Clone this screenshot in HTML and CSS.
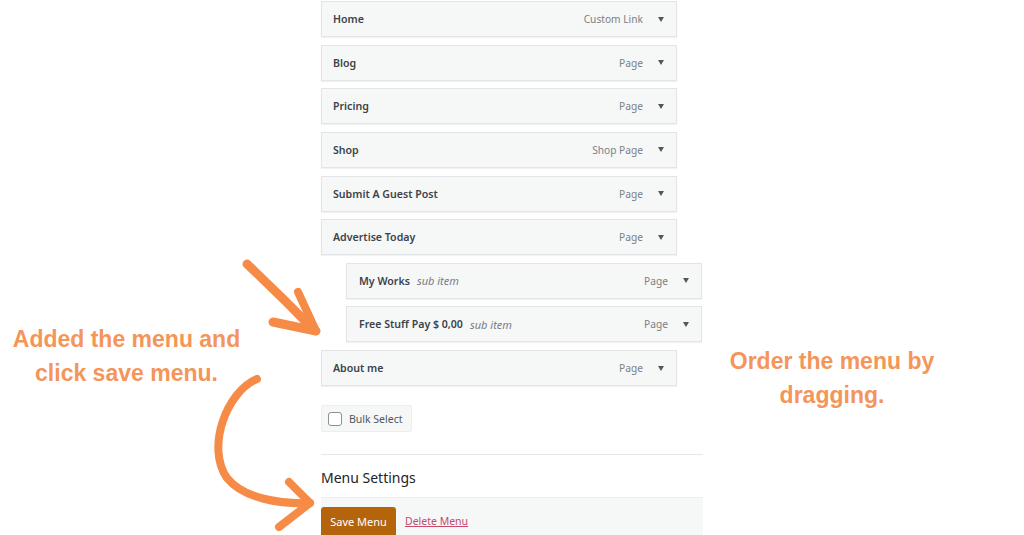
FILE: index.html
```html
<!DOCTYPE html>
<html>
<head>
<meta charset="utf-8">
<link rel="stylesheet" href="styles.css">
</head>
<body>
<div class="page">
  <div class="menu">
    <ul class="items">
      <li class="item"><span class="title">Home</span><span class="type">Custom Link</span><span class="caret"></span></li>
      <li class="item"><span class="title">Blog</span><span class="type">Page</span><span class="caret"></span></li>
      <li class="item"><span class="title">Pricing</span><span class="type">Page</span><span class="caret"></span></li>
      <li class="item"><span class="title">Shop</span><span class="type">Shop Page</span><span class="caret"></span></li>
      <li class="item"><span class="title">Submit A Guest Post</span><span class="type">Page</span><span class="caret"></span></li>
      <li class="item"><span class="title">Advertise Today</span><span class="type">Page</span><span class="caret"></span></li>
      <li class="item sub"><span class="title">My Works</span><span class="subtag">sub item</span><span class="type">Page</span><span class="caret"></span></li>
      <li class="item sub"><span class="title">Free Stuff Pay $ 0,00</span><span class="subtag">sub item</span><span class="type">Page</span><span class="caret"></span></li>
      <li class="item"><span class="title">About me</span><span class="type">Page</span><span class="caret"></span></li>
    </ul>
    <label class="bulk"><span class="check"></span><span>Bulk Select</span></label>
    <div class="sep"></div>
    <h2 class="settings">Menu Settings</h2>
    <div class="actions">
      <button class="save">Save Menu</button>
      <a class="delete" href="#">Delete Menu</a>
    </div>
  </div>

  <div class="note note-left">Added the menu and<br>click save menu.</div>
  <div class="note note-right">Order the menu by<br>dragging.</div>

  <svg class="arrows" width="1024" height="535" viewBox="0 0 1024 535">
    <g fill="none" stroke="#f68b47" stroke-linecap="round" stroke-linejoin="round">
      <path d="M247 264 Q 282 297 314 330" stroke-width="9"/>
      <path d="M298 292 L316 331" stroke-width="8"/>
      <path d="M273 322 L316 331" stroke-width="9"/>
      <path d="M257 379 C 226 392, 206 448, 227 478 C 244 499, 280 504, 310 503" stroke-width="8"/>
      <path d="M289 482 L310 503" stroke-width="8"/>
      <path d="M279 527 L310 503" stroke-width="8"/>
    </g>
  </svg>
</div>
</body>
</html>
```

FILE: styles.css
```css
* { box-sizing: border-box; }
html, body {
  margin: 0;
  padding: 0;
  background: #ffffff;
}
.page {
  position: relative;
  width: 1024px;
  height: 535px;
  overflow: hidden;
  font-family: "Noto Sans", "Open Sans", sans-serif;
}
.menu {
  margin-left: 321px;
  width: 382px;
  padding-top: 1px;
  display: flex;
  flex-direction: column;
}
.items {
  list-style: none;
  margin: 0;
  padding: 0;
  display: flex;
  flex-direction: column;
  gap: 7.625px;
}
.item {
  width: 356px;
  height: 36px;
  background: #f6f7f7;
  border: 1px solid #e2e4e7;
  box-shadow: 0 1px 1px rgba(0,0,0,0.05);
  display: flex;
  align-items: center;
  padding: 0 12px 0 11px;
  font-size: 11px;
}
.item.sub {
  margin-left: 25px;
  padding-left: 12px;
}
.title {
  font-weight: 600;
  font-size: 10.6px;
  color: #3c434a;
}
.subtag {
  margin-left: 7px;
  font-style: italic;
  color: #787c82;
}
.type {
  margin-left: auto;
  font-size: 10.2px;
  color: #7c8086;
}
.caret {
  margin-left: 15px;
  width: 0;
  height: 0;
  border-left: 3.5px solid transparent;
  border-right: 3.5px solid transparent;
  border-top: 5px solid #50575e;
}
.bulk {
  margin-top: 19px;
  width: 91px;
  height: 27px;
  background: #f6f7f7;
  border: 1px solid #eceeef;
  border-radius: 2px;
  display: flex;
  align-items: center;
  padding-left: 6px;
  gap: 7px;
  font-size: 10.5px;
  color: #50575e;
}
.check {
  width: 14px;
  height: 14px;
  border: 1px solid #8c8f94;
  border-radius: 3px;
  background: #fff;
}
.sep {
  margin-top: 22px;
  height: 1px;
  background: #e6e7e8;
}
.settings {
  margin: 13px 0 0 0;
  font-size: 14px;
  font-weight: 400;
  line-height: 20px;
  color: #1d2327;
}
.actions {
  margin-top: 9px;
  height: 40px;
  background: #f6f7f7;
  border-top: 1px solid #eeeeee;
  display: flex;
  align-items: flex-start;
  padding-top: 9px;
  gap: 9px;
}
.save {
  width: 75px;
  height: 30px;
  background: #b4640a;
  color: #ffffff;
  border: none;
  border-radius: 3px;
  font-family: "Noto Sans", "Open Sans", sans-serif;
  font-size: 11px;
  padding: 0;
  line-height: 28px;
}
.delete {
  margin-top: 7px;
  font-size: 10.5px;
  color: #c54a6a;
  text-decoration: underline;
}
.note {
  position: absolute;
  font-family: "Liberation Sans", Arial, sans-serif;
  font-weight: 700;
  font-size: 23px;
  line-height: 33.5px;
  color: #f4955a;
  text-align: center;
  white-space: nowrap;
}
.note-left {
  left: 0;
  width: 253px;
  top: 323px;
}
.note-right {
  left: 712px;
  width: 240px;
  top: 345px;
}
.arrows {
  position: absolute;
  left: 0;
  top: 0;
  pointer-events: none;
}
```
